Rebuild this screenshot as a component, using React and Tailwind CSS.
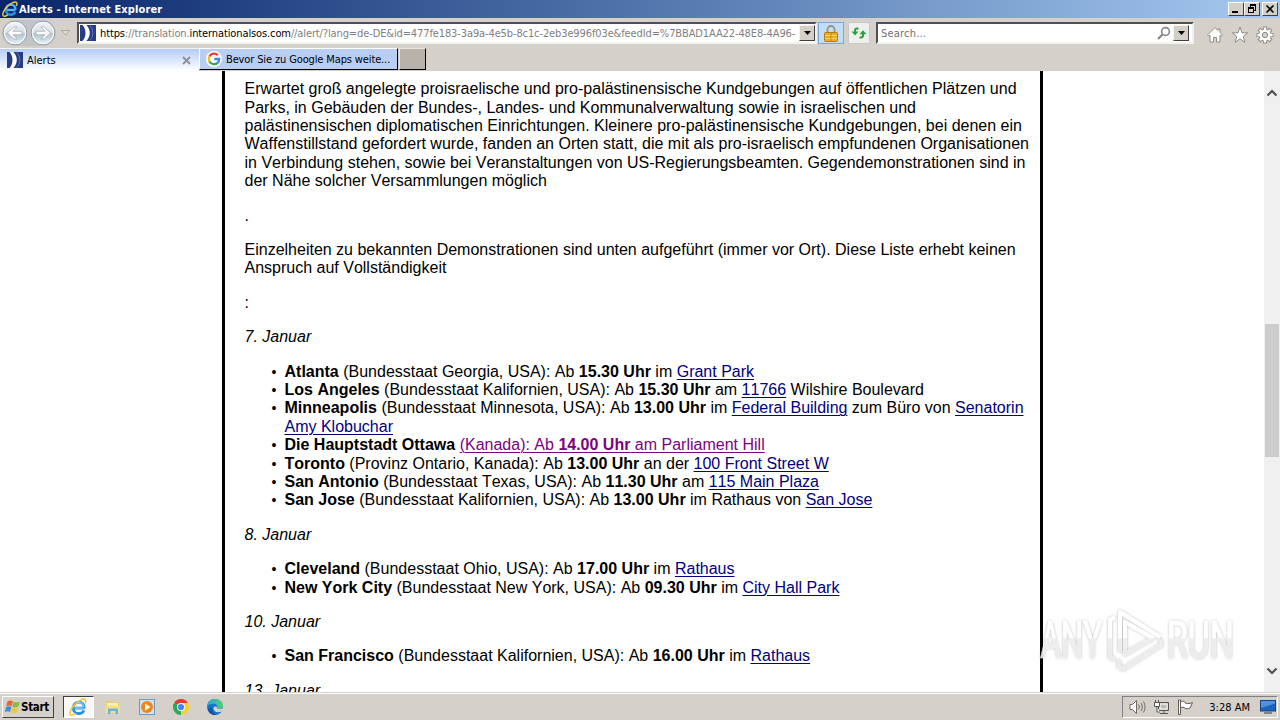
import React from 'react';

const cities7 = [
  [['b', 'Atlanta'], ['t', ' (Bundesstaat Georgia, USA): Ab '], ['b', '15.30 Uhr'], ['t', ' im '], ['a', 'Grant Park']],
  [['b', 'Los Angeles'], ['t', ' (Bundesstaat Kalifornien, USA): Ab '], ['b', '15.30 Uhr'], ['t', ' am '], ['a', '11766'], ['t', ' Wilshire Boulevard']],
  [['b', 'Minneapolis'], ['t', ' (Bundesstaat Minnesota, USA): Ab '], ['b', '13.00 Uhr'], ['t', ' im '], ['a', 'Federal Building'], ['t', ' zum Büro von '], ['a', 'Senatorin'], ['br'], ['a', 'Amy Klobuchar']],
  [['b', 'Die Hauptstadt Ottawa'], ['t', ' '], ['v', '(Kanada): Ab '], ['vb', '14.00 Uhr'], ['v', ' am Parliament Hill']],
  [['b', 'Toronto'], ['t', ' (Provinz Ontario, Kanada): Ab '], ['b', '13.00 Uhr'], ['t', ' an der '], ['a', '100 Front Street W']],
  [['b', 'San Antonio'], ['t', ' (Bundesstaat Texas, USA): Ab '], ['b', '11.30 Uhr'], ['t', ' am '], ['a', '115 Main Plaza']],
  [['b', 'San Jose'], ['t', ' (Bundesstaat Kalifornien, USA): Ab '], ['b', '13.00 Uhr'], ['t', ' im Rathaus von '], ['a', 'San Jose']],
];

const cities8 = [
  [['b', 'Cleveland'], ['t', ' (Bundesstaat Ohio, USA): Ab '], ['b', '17.00 Uhr'], ['t', ' im '], ['a', 'Rathaus']],
  [['b', 'New York City'], ['t', ' (Bundesstaat New York, USA): Ab '], ['b', '09.30 Uhr'], ['t', ' im '], ['a', 'City Hall Park']],
];

const cities10 = [
  [['b', 'San Francisco'], ['t', ' (Bundesstaat Kalifornien, USA): Ab '], ['b', '16.00 Uhr'], ['t', ' im '], ['a', 'Rathaus']],
];

const partClass = {
  t: '',
  b: 'font-bold',
  a: 'text-[#000080] underline underline-offset-2 decoration-1',
  v: 'text-[#800080] underline underline-offset-2 decoration-1',
  vb: 'text-[#800080] font-bold underline underline-offset-2 decoration-1',
};

function CityList({ items }) {
  return (
    <ul className="mb-4">
      {items.map((parts, i) => (
        <li key={i} className="flex whitespace-pre">
          <span className="w-[40px] pl-[27px] shrink-0 text-[14px]">•</span>
          <span>
            {parts.map(([kind, text], j) =>
              kind === 'br' ? <br key={j} /> : <span key={j} className={partClass[kind]}>{text}</span>
            )}
          </span>
        </li>
      ))}
    </ul>
  );
}

function IeLogo({ size }) {
  return (
    <svg width={size} height={size} viewBox="0 0 16 16" fill="none" className="shrink-0">
      <path d="M13.800 9H4.500M13.600 9C13.600 5.500 11.500 3.600 8.700 3.600S3.800 5.800 3.800 8.800s2.100 5 4.900 5c2.200 0 3.800-1 4.500-2.700" stroke="#2a93e0" strokeWidth="2.500" />
      <path d="M13.200 8C12.900 5.300 11 4 8.700 4S4.400 5.800 4.200 8.300M5 9h8" stroke="#8ad6fb" strokeWidth=".9" />
      <path d="M14.400 5c1-2.400.6-3.900-.9-4C11 .8 6.300 3.600 3.300 7.700.8 11.200 0 14.500 1.700 15.200c1 .3 2.700-.4 4.200-1.600" stroke="#f0c83a" strokeWidth="1.400" />
    </svg>
  );
}

function SosIcon() {
  return (
    <svg width="16" height="16" viewBox="0 0 16 16" className="shrink-0">
      <rect width="16" height="16" fill="#263c86" />
      <path d="M2.500 0C6.500 4.500 6.500 11.500 2.500 16h3.800C11 11.500 11 4.500 6.300 0z" fill="#fff" />
      <path d="M9.500.5c4 4.500 4 10.500 0 15h.6c4.200-4.500 4.200-10.500 0-15z" fill="#7f90c4" />
    </svg>
  );
}

function GoogleIcon() {
  return (
    <svg width="16" height="16" viewBox="0 0 16 16" className="shrink-0">
      <circle cx="8" cy="8" r="8" fill="#fff" />
      <g fill="none" strokeWidth="2.300">
        <path d="M11.800 4.300A5.200 5.200 0 0 0 3.400 5.500" stroke="#ea4335" />
        <path d="M3.400 5.500a5.200 5.200 0 0 0 0 5" stroke="#fbbc05" />
        <path d="M3.400 10.500a5.200 5.200 0 0 0 8.200 1.300" stroke="#34a853" />
        <path d="M11.600 11.800A5.200 5.200 0 0 0 13.200 8H8.300" stroke="#4285f4" />
      </g>
    </svg>
  );
}

function RoundArrow({ flip }) {
  return (
    <svg width="26" height="26" viewBox="0 0 26 26" className="shrink-0">
      <defs>
        <linearGradient id="orb" x1="0" y1="0" x2="0" y2="1">
          <stop offset="0" stopColor="#f5f7f8" />
          <stop offset=".48" stopColor="#d5dde2" />
          <stop offset=".52" stopColor="#b4c3cc" />
          <stop offset="1" stopColor="#e4f4fa" />
        </linearGradient>
      </defs>
      <circle cx="13" cy="13" r="11.800" fill="url(#orb)" stroke="#8b979f" />
      <circle cx="13" cy="13" r="10.600" fill="none" stroke="#f3f7f9" strokeWidth="1.200" />
      <g transform={flip ? 'translate(26 0) scale(-1 1)' : undefined}>
        <path d="M5.500 13l6.500-6h3.200l-4.400 4.300h9v3.400h-9l4.400 4.300H12z" fill="#fff" stroke="#9eabb4" strokeWidth=".7" />
      </g>
    </svg>
  );
}

function DropButton() {
  return (
    <div className="w-4 h-4 shrink-0 bg-[#d4d0c8] border border-t-[#f4f2ee] border-l-[#f4f2ee] border-b-[#404040] border-r-[#404040] flex items-center justify-center">
      <svg width="7" height="4" viewBox="0 0 7 4"><path d="M0 0h7L3.500 4z" fill="#000" /></svg>
    </div>
  );
}

function TitleBar() {
  const box = 'h-[14px] bg-[#d4d0c8] border border-t-white border-l-white border-b-[#404040] border-r-[#404040] flex items-center justify-center';
  return (
    <div className="h-[18px] shrink-0 flex items-center bg-linear-to-r from-[#0a246a] to-[#a6caf0] pl-[2px] pr-[2px]">
      <IeLogo size={16} />
      <span className="ml-[1px] text-white font-bold text-[11px] tracking-[0.12px] pt-[2px] whitespace-nowrap">Alerts - Internet Explorer</span>
      <div className="ml-auto flex">
        <div className={`${box} w-4`}>
          <svg width="10" height="10" viewBox="0 0 10 10"><path d="M1 7h6v2H1z" /></svg>
        </div>
        <div className={`${box} w-4`}>
          <svg width="10" height="10" viewBox="0 0 10 10" fill="none" stroke="#000" shapeRendering="crispEdges">
            <path d="M3 1.500h6M3.500 1v3M8.500 1v6M7 6.500h2M1 4.500h6M1.500 4v5M6.500 4v5M1 8.500h6" />
            <path d="M3 .5h6M1 3.500h6" />
          </svg>
        </div>
        <div className={`${box} w-4 ml-[2px]`}>
          <svg width="10" height="10" viewBox="0 0 10 10"><path d="M1.500 1.500l7 7M8.500 1.500l-7 7" stroke="#000" strokeWidth="1.600" /></svg>
        </div>
      </div>
    </div>
  );
}

function NavBar() {
  const sunken = 'h-[22px] bg-white border-2 border-t-[#505050] border-l-[#505050] border-b-[#f4f2ee] border-r-[#f4f2ee] flex items-center';
  return (
    <div className="h-[30px] shrink-0 flex items-center">
      <div className="ml-[2px] flex gap-[2px] h-[26px] rounded-full bg-[#c3c4c3] shrink-0">
        <RoundArrow />
        <RoundArrow flip />
      </div>
      <svg width="9" height="6" viewBox="0 0 9 6" className="ml-[5px] shrink-0"><path d="M.5.5h8l-4 4.500z" fill="#dedad4" stroke="#aaa7a2" /></svg>
      <div className={`${sunken} w-[740px] ml-[7px] pl-[1px] shrink-0`}>
        <SosIcon />
        <div className="ml-[4px] w-[699px] pt-[2px] text-[11px] text-[#808080] whitespace-nowrap tracking-[-0.115px]">
          <span className="text-black">https</span>://translation.<span className="text-black">internationalsos.com</span>//alert/?lang=de-DE&amp;id=477fe183-3a9a-4e5b-8c1c-2eb3e996f03e&amp;feedId=%7BBAD1AA22-48E8-4A96-
        </div>
        <DropButton />
      </div>
      <div className="ml-[1px] w-[26px] h-[22px] shrink-0 bg-[#c3dcf8] border border-[#7ba7dc] flex items-center justify-center">
        <svg width="14" height="17" viewBox="0 0 14 17">
          <path d="M3.500 8V4.500a3.500 3.500 0 0 1 7 0V8" fill="none" stroke="#9a9479" strokeWidth="1.800" />
          <rect x=".5" y="7.500" width="13" height="9" rx="1" fill="#e9ad22" stroke="#b87a10" />
          <path d="M1 10.500h12M1 13.500h12" stroke="#f8d66b" />
          <path d="M7 8v8" stroke="#c88d17" />
        </svg>
      </div>
      <div className="ml-[4px] w-[22px] h-[22px] shrink-0 bg-[#eef0ee] border border-[#c8c8c4] rounded-[2px] flex items-center justify-center">
        <svg width="16" height="14" viewBox="0 0 16 14">
          <path d="M7.500 2.500H6c-1.500 0-2 .8-2 2V6" fill="none" stroke="#2f9e3e" strokeWidth="2" />
          <path d="M.5 5.500h7L4 9.500z" fill="#2f9e3e" />
          <path d="M8.500 11.500H10c1.500 0 2-.8 2-2V8" fill="none" stroke="#2f9e3e" strokeWidth="2" />
          <path d="M8.500 8.200h7L12 4.200z" fill="#2f9e3e" />
        </svg>
      </div>
      <div className={`${sunken} w-[318px] ml-[6px] shrink-0 pl-[3px] pr-[3px]`}>
        <span className="text-[11px] text-[#707070] tracking-[0.2px] pt-[2px]">Search...</span>
        <svg width="14" height="14" viewBox="0 0 14 14" className="ml-auto mr-[2px]" fill="none" stroke="#868686">
          <circle cx="8.500" cy="5.500" r="3.900" strokeWidth="1.600" />
          <path d="M5.500 8.500L1 13" strokeWidth="2.200" />
        </svg>
        <DropButton />
      </div>
      <div className="ml-[12px] flex gap-[7px] mt-[4px]">
        <svg width="18" height="18" viewBox="0 0 18 18" fill="#fff" stroke="#8f8c87" strokeLinejoin="round">
          <path d="M9 1.500L1.500 9l1.300 1.300L4 9.200V16h3.500v-4.500h3V16H14V9.200l1.200 1.100L16.500 9 14 6.500V3h-2v1.500z" />
        </svg>
        <svg width="18" height="18" viewBox="0 0 18 18" fill="#fff" stroke="#8f8c87" strokeLinejoin="round">
          <path d="M9 1.200l2 5.600h5.700l-4.500 3.600 1.700 6L9 12.800l-4.900 3.600 1.700-6L1.300 6.800H7z" />
        </svg>
        <svg width="18" height="18" viewBox="0 0 18 18" fill="none">
          {/* eight teeth: grey pass for the rim, white pass on top */}
          <g stroke="#8f8c87" strokeWidth="4.200">
            <path d="M9 .5v17M.5 9h17M3 3l12 12M15 3L3 15" />
          </g>
          <circle cx="9" cy="9" r="6.500" fill="#8f8c87" />
          <g stroke="#fff" strokeWidth="2.300">
            <path d="M9 1.400v15.200M1.400 9h15.200M3.700 3.700l10.600 10.600M14.300 3.700L3.700 14.300" />
          </g>
          <circle cx="9" cy="9" r="5.600" fill="#fff" />
          <circle cx="9" cy="9" r="2.700" fill="#d5d0c9" stroke="#8f8c87" />
        </svg>
      </div>
    </div>
  );
}

function TabBar() {
  return (
    <div className="h-[23px] shrink-0 flex items-start text-[11px]">
      <div className="w-[199px] h-[23px] flex items-center pl-[7px] pr-[8px] bg-linear-to-b from-[#b5cdf5] to-white border-t border-t-[#f4f2ee]">
        <SosIcon />
        <span className="ml-[4px] pt-[2px]">Alerts</span>
        <svg width="9" height="9" viewBox="0 0 9 9" className="ml-auto"><path d="M1 1l7 7M8 1L1 8" stroke="#8a8f9a" strokeWidth="1.800" /></svg>
      </div>
      <div className="w-[199px] h-[22px] flex items-center pl-[6px] bg-[#b9cef3] border border-t-white border-l-white border-b-black border-r-black">
        <GoogleIcon />
        <span className="ml-[4px] pt-[3px] whitespace-nowrap tracking-[-0.13px]">Bevor Sie zu Google Maps weite...</span>
      </div>
      <div className="ml-[1px] w-[27px] h-[22px] bg-[#b9b2ab] border border-t-[#e8e4de] border-l-[#e8e4de] border-b-black border-r-black" />
    </div>
  );
}

function Watermark() {
  return (
    <svg width="216" height="68" viewBox="0 0 216 68" className="absolute left-[1036px] top-[535px]">
      <defs>
        <linearGradient id="wm" x1="0" y1="10" x2="0" y2="52" gradientUnits="userSpaceOnUse">
          <stop offset="0" stopColor="#fff" />
          <stop offset=".52" stopColor="#fff" />
          <stop offset=".54" stopColor="#ededed" />
          <stop offset="1" stopColor="#ebebeb" />
        </linearGradient>
        <filter id="glow" x="-10%" y="-10%" width="120%" height="120%">
          <feDropShadow dx="0" dy="0" stdDeviation="1.600" floodColor="#000" floodOpacity=".32" />
        </filter>
      </defs>
      <g filter="url(#glow)" opacity=".9">
        <g fill="url(#wm)" stroke="url(#wm)" strokeWidth=".6" fontFamily="Roboto" fontSize="51">
          <text x="4" y="52" textLength="62" lengthAdjust="spacingAndGlyphs">ANY</text>
          <text x="131" y="52" textLength="67" lengthAdjust="spacingAndGlyphs">RUN</text>
        </g>
        <g fill="none" stroke="url(#wm)" strokeWidth="4" strokeLinejoin="round">
          <path d="M79 11l-5 3v37l5 3" />
          <path d="M84 46V6l40 25" />
          <path d="M89 16v32l28-16z" />
          <path d="M83 54v7l4 2 38-24v-6" />
        </g>
      </g>
    </svg>
  );
}

function Page() {
  return (
    <div className="h-[621px] shrink-0 relative flex overflow-hidden bg-white">
      <div className="ml-[222px] w-[821px] h-full border-x-[3px] border-black pl-[19.5px] pt-[9.15px] overflow-hidden font-['Liberation_Sans',Arial,sans-serif] [font-kerning:none] text-[16px] leading-[18.4px] whitespace-nowrap text-black">
        <p className="mb-4">
          Erwartet groß angelegte proisraelische und pro-palästinensische Kundgebungen auf öffentlichen Plätzen und<br />
          Parks, in Gebäuden der Bundes-, Landes- und Kommunalverwaltung sowie in israelischen und<br />
          palästinensischen diplomatischen Einrichtungen. Kleinere pro-palästinensische Kundgebungen, bei denen ein<br />
          Waffenstillstand gefordert wurde, fanden an Orten statt, die mit als pro-israelisch empfundenen Organisationen<br />
          in Verbindung stehen, sowie bei Veranstaltungen von US-Regierungsbeamten. Gegendemonstrationen sind in<br />
          der Nähe solcher Versammlungen möglich
        </p>
        <p className="mb-4">.</p>
        <p className="mb-4">
          Einzelheiten zu bekannten Demonstrationen sind unten aufgeführt (immer vor Ort). Diese Liste erhebt keinen<br />
          Anspruch auf Vollständigkeit
        </p>
        <p className="mb-4">:</p>
        <p className="mb-4 italic">7. Januar</p>
        <CityList items={cities7} />
        <p className="mb-4 italic">8. Januar</p>
        <CityList items={cities8} />
        <p className="mb-4 italic">10. Januar</p>
        <CityList items={cities10} />
        <p className="italic">13. Januar</p>
      </div>
      <div className="ml-auto w-4 h-full bg-[#f0f0f0] flex flex-col items-center">
        <svg width="12" height="8" viewBox="0 0 12 8" className="mt-[18px]"><path d="M1.500 6.500L6 2l4.500 4.500" fill="none" stroke="#505050" strokeWidth="2.200" /></svg>
        <div className="mt-[227px] w-[14px] h-[133px] bg-[#cdcdcd]" />
        <svg width="12" height="8" viewBox="0 0 12 8" className="mt-auto mb-[17px]"><path d="M1.500 1.500L6 6l4.500-4.500" fill="none" stroke="#505050" strokeWidth="2.200" /></svg>
      </div>
      <Watermark />
    </div>
  );
}

function TaskBar() {
  return (
    <div className="h-[28px] shrink-0 flex items-center border-t border-[#d4d0c8] shadow-[inset_0_1px_0_#fff] pt-[1px]">
      <div className="ml-[2px] w-[52px] h-[22px] flex items-center pl-[2px] border border-t-white border-l-white border-b-[#404040] border-r-[#404040]">
        <svg width="16" height="16" viewBox="0 0 16 16" className="shrink-0">
          <path d="M2.500 2.500C4.500 1 6.300 1.300 8 2.300L6.700 7.300C5 6.200 3.300 6.300 1.200 7.500z" fill="#e8672c" />
          <path d="M8.800 2.700c2 .9 4 .9 6-.2l-1.400 5c-2 1.100-4 1-5.900.2z" fill="#84bb3c" />
          <path d="M1 8.300c2-1.200 3.700-1.300 5.400-.2L5 13c-1.700-1-3.400-.9-5.300.3z" fill="#3d8fd4" />
          <path d="M7.300 8.600c2 .9 3.900.9 5.900-.2l-1.400 5c-2 1.100-4 1-5.900.2z" fill="#f6c637" />
        </svg>
        <span className="font-bold text-[11.500px] tracking-[-0.3px] pt-[2px]">Start</span>
      </div>
      <div className="ml-[9px] w-[31px] h-[22px] flex items-center justify-center pr-[2px] bg-[#faf9f7] border border-t-[#404040] border-l-[#404040] border-b-white border-r-white">
        <IeLogo size={18} />
      </div>
      <svg width="18" height="18" viewBox="0 0 18 18" className="ml-[10px]">
        <path d="M2 3h6l1.500 1.500H15V15H2z" fill="#e9cc6c" />
        <path d="M3 5h11v8H3z" fill="#fbf1b6" />
        <path d="M1.500 7.500h14V15h-14z" fill="#f5e08a" />
        <path d="M4 16v-5.500h10V16h-2.500v-3h-5v3z" fill="#68b5dc" />
      </svg>
      <svg width="18" height="18" viewBox="0 0 18 18" className="ml-[16px]">
        <rect x="1.500" y="1.500" width="15" height="15" fill="#cfe2f3" stroke="#6b9cc8" />
        <circle cx="9" cy="9" r="6" fill="#f2861b" />
        <path d="M7 5.500v7l5.500-3.500z" fill="#fff" />
      </svg>
      <svg width="16" height="16" viewBox="0 0 16 16" className="ml-[17px]">
        <path d="M8 8L1.070 4A8 8 0 0 1 14.930 4z" fill="#e33b2e" />
        <path d="M8 8h-.1L8 16A8 8 0 0 1 1.070 4z" fill="#2da94f" />
        <path d="M8 4h6.930A8 8 0 0 1 8 16l3.460-6z" fill="#fdd023" />
        <circle cx="8" cy="8" r="4" fill="#fff" />
        <circle cx="8" cy="8" r="3.100" fill="#4285f4" />
      </svg>
      <svg width="16" height="16" viewBox="0 0 16 16" className="ml-[18px]">
        <defs>
          <linearGradient id="edge" x1="0" y1="0" x2="1" y2="0">
            <stop offset="0" stopColor="#2ba5df" />
            <stop offset="1" stopColor="#55cf6d" />
          </linearGradient>
        </defs>
        <circle cx="8" cy="8" r="8" fill="#1277cb" />
        <path d="M0 8C0 3.500 3.500 0 8 0s8 3.200 8 6.500c0 2.200-1.600 3.600-4 3.600-1.500 0-2.300-.5-2-1.300.9-2.200-.8-4-3.300-4C3.500 4.800 1 6 0 8z" fill="url(#edge)" />
        <path d="M6.500 8.500c-.5 3 2 4.700 5 4.700 1.500 0 2.900-.5 4-1.200l1-3c-1 .8-2.500 1.200-4 1.100-2 0-3-.9-2.500-2-1.200-.9-3-.9-3.500.4z" fill="#d5d0c9" />
        <path d="M5.500 8C4 11.500 6.500 15 10 15.600 6 17 1.500 14.500 1 10z" fill="#12549f" />
      </svg>
      <div className="ml-auto mr-[2px] w-[156px] h-[22px] flex items-center pl-[6px] pr-[1px] border border-t-[#808080] border-l-[#808080] border-b-white border-r-white">
        <svg width="17" height="16" viewBox="0 0 17 16" fill="none" stroke="#6d6a66">
          <path d="M1 5.500h2.500l4-4v13l-4-4H1z" fill="#fff" />
          <path d="M9.500 5.500c1 1.500 1 3.500 0 5M12 4c1.700 2.500 1.700 5.500 0 8M14.300 2.500c2.300 3.500 2.300 7.500 0 11" />
        </svg>
        <svg width="17" height="16" viewBox="0 0 17 16" fill="none" stroke="#555" className="ml-[7px]">
          <path d="M5.500 3.500h10v8h-10z" fill="#bdbab5" />
          <path d="M7 5h7v5H7z" fill="#bdbab5" stroke="#fff" />
          <path d="M7 14.500h8M11 12v2" />
          <path d="M1.500 3.500h5v4h-5zM2.500 1v2.500M5.500 1v2.500M4 7.500v5.500h3" fill="#fff" />
        </svg>
        <svg width="17" height="16" viewBox="0 0 17 16" className="ml-[7px]" stroke="#5e5b57">
          <path d="M1.500 1v14.500h2V1z" fill="#fff" />
          <path d="M3.500 2.500c2.500-1 4 .3 5.500 1.800 2 .5 4 .2 6.500-.6L13 9c-2 .9-4 1-5 .2C7 8 5.500 8 3.500 8.800z" fill="#fff" />
        </svg>
        <span className="ml-auto pt-[2px] text-[11px] whitespace-nowrap">3:28 AM</span>
        <svg width="16" height="14" viewBox="0 0 16 14" className="ml-[10px] shrink-0">
          <rect x=".5" y=".5" width="15" height="10.500" fill="#1d63be" stroke="#16427f" />
          <path d="M1 1h14v2.500L1 8z" fill="#4d93e0" />
          <path d="M4 13h8" stroke="#5f6a78" strokeWidth="1.500" />
        </svg>
      </div>
    </div>
  );
}

export default function App() {
  return (
    <div className="w-[1280px] h-[720px] overflow-hidden flex flex-col bg-[#d5d0c9] text-black font-['DejaVu_Sans_Condensed','DejaVu_Sans',Tahoma,sans-serif]">
      <TitleBar />
      <NavBar />
      <TabBar />
      <Page />
      <TaskBar />
    </div>
  );
}
